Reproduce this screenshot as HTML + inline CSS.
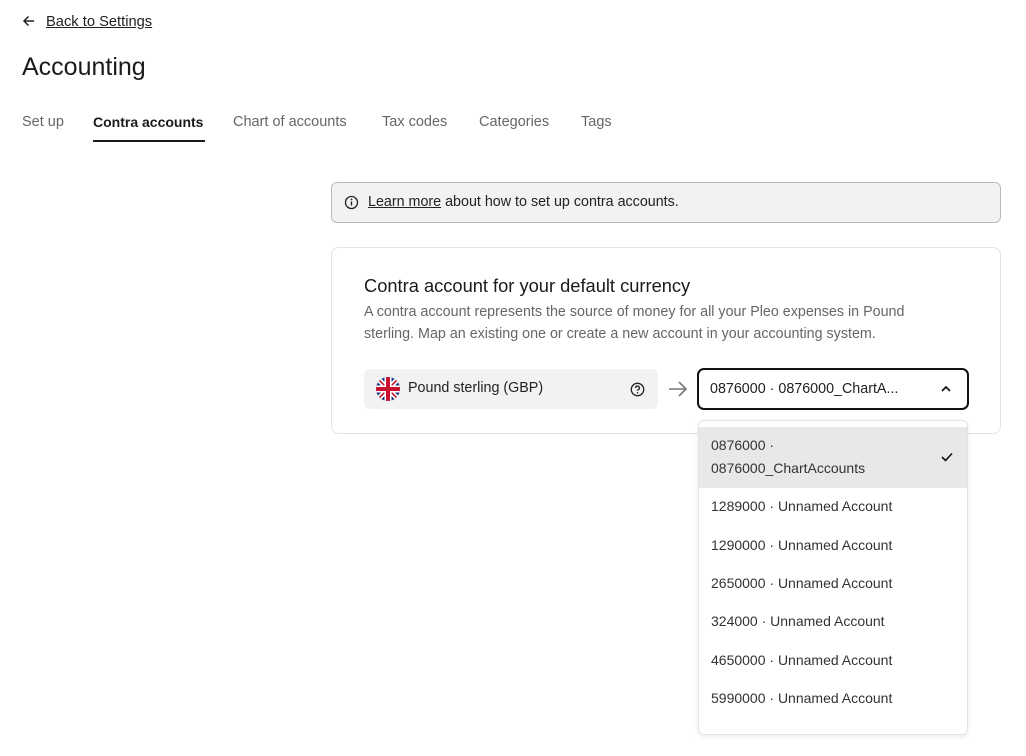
<!DOCTYPE html>
<html><head><style>
*{box-sizing:border-box;margin:0;padding:0}
body{width:1026px;height:756px;background:#fff;font-family:"Liberation Sans",sans-serif;color:#222;position:relative;overflow:hidden}
.abs{position:absolute}
.tab{position:absolute;top:114px;font-size:14.5px;color:#666}
.item{position:absolute;left:12px;font-size:14px;color:#333}
</style></head><body>
<svg class="abs" style="left:22px;top:14px" width="14" height="14" viewBox="0 0 14 14"><path d="M12 7H2M6.5 2.5L2 7l4.5 4.5" stroke="#222" stroke-width="1.5" fill="none"/></svg>
<div class="abs" style="left:46px;top:14px;font-size:14.7px;text-decoration:underline">Back to Settings</div>
<div class="abs" style="left:22px;top:53px;font-size:25px;color:#1a1a1a">Accounting</div>
<div class="tab" style="left:22px">Set up</div>
<div class="tab" style="left:93px;color:#1a1a1a;font-weight:bold;font-size:14px">Contra accounts</div>
<div class="abs" style="left:93px;top:140px;width:112px;height:1.5px;background:#1a1a1a"></div>
<div class="tab" style="left:233px">Chart of accounts</div>
<div class="tab" style="left:382px">Tax codes</div>
<div class="tab" style="left:479px">Categories</div>
<div class="tab" style="left:581px">Tags</div>

<div class="abs" style="left:331px;top:182px;width:670px;height:41px;background:#f2f2f2;border:1px solid #bbb;border-radius:6px"></div>
<svg class="abs" style="left:344px;top:195px" width="15" height="15" viewBox="0 0 15 15"><circle cx="7.5" cy="7.5" r="6" stroke="#222" stroke-width="1.3" fill="none"/><path d="M7.5 6.5v4" stroke="#222" stroke-width="1.4"/><circle cx="7.5" cy="4.5" r=".9" fill="#222"/></svg>
<div class="abs" style="left:368px;top:194px;font-size:14.3px"><span style="text-decoration:underline">Learn more</span> about how to set up contra accounts.</div>

<div class="abs" style="left:331px;top:247px;width:670px;height:187px;border:1px solid #e3e3e3;border-radius:8px"></div>
<div class="abs" style="left:364px;top:275px;font-size:18.3px;color:#1a1a1a">Contra account for your default currency</div>
<div class="abs" style="left:364px;top:301px;width:580px;font-size:14.3px;line-height:22px;color:#666">A contra account represents the source of money for all your Pleo expenses in Pound sterling. Map an existing one or create a new account in your accounting system.</div>

<div class="abs" style="left:364px;top:369px;width:294px;height:40px;background:#f2f2f2;border-radius:6px"></div>
<svg class="abs" style="left:376px;top:377px" width="24" height="24" viewBox="0 0 24 24"><defs><clipPath id="c"><circle cx="12" cy="12" r="12"/></clipPath></defs><g clip-path="url(#c)"><rect width="24" height="24" fill="#1f3a7a"/><path d="M0 0L24 24M24 0L0 24" stroke="#fff" stroke-width="5"/><path d="M0 0L24 24M24 0L0 24" stroke="#c8102e" stroke-width="1.6"/><path d="M12 0v24M0 12h24" stroke="#fff" stroke-width="7"/><path d="M12 0v24M0 12h24" stroke="#c8102e" stroke-width="4"/></g></svg>
<div class="abs" style="left:408px;top:380px;font-size:14.3px;color:#222">Pound sterling (GBP)</div>
<svg class="abs" style="left:630px;top:382px" width="15" height="15" viewBox="0 0 15 15"><circle cx="7.5" cy="7.5" r="6.2" stroke="#222" stroke-width="1.3" fill="none"/><path d="M5.6 6a1.9 1.9 0 1 1 2.6 1.7c-.5.2-.7.5-.7 1.1" stroke="#222" stroke-width="1.3" fill="none"/><circle cx="7.5" cy="10.8" r=".8" fill="#222"/></svg>
<svg class="abs" style="left:668px;top:380px" width="20" height="18" viewBox="0 0 20 18"><path d="M1 9h17M11 2l7 7-7 7" stroke="#777" stroke-width="1.6" fill="none"/></svg>
<div class="abs" style="left:697px;top:368px;width:272px;height:42px;border:2.5px solid #111;border-radius:7px"></div>
<div class="abs" style="left:710px;top:381px;font-size:14.3px;color:#222">0876000 · 0876000_ChartA...</div>
<svg class="abs" style="left:940px;top:384px" width="12" height="10" viewBox="0 0 12 10"><path d="M2 7l4-4 4 4" stroke="#111" stroke-width="1.7" fill="none"/></svg>

<div class="abs" style="left:698px;top:420px;width:270px;height:315px;border:1px solid #e3e3e3;border-radius:6px;background:#fff;box-shadow:0 2px 6px rgba(0,0,0,.08);overflow:hidden">
<div class="abs" style="left:0;top:6px;width:270px;height:61px;background:#e8e8e8"></div>
<div class="item" style="top:13px;line-height:23px">0876000 ·<br>0876000_ChartAccounts</div>
<svg class="abs" style="left:241px;top:30px" width="14" height="12" viewBox="0 0 14 12"><path d="M2 6l3.5 3.5L12 2.5" stroke="#111" stroke-width="1.6" fill="none"/></svg>
<div class="item" style="top:77px">1289000 · Unnamed Account</div>
<div class="item" style="top:116px">1290000 · Unnamed Account</div>
<div class="item" style="top:154px">2650000 · Unnamed Account</div>
<div class="item" style="top:192px">324000 · Unnamed Account</div>
<div class="item" style="top:231px">4650000 · Unnamed Account</div>
<div class="item" style="top:269px">5990000 · Unnamed Account</div>
</div>
</body></html>
